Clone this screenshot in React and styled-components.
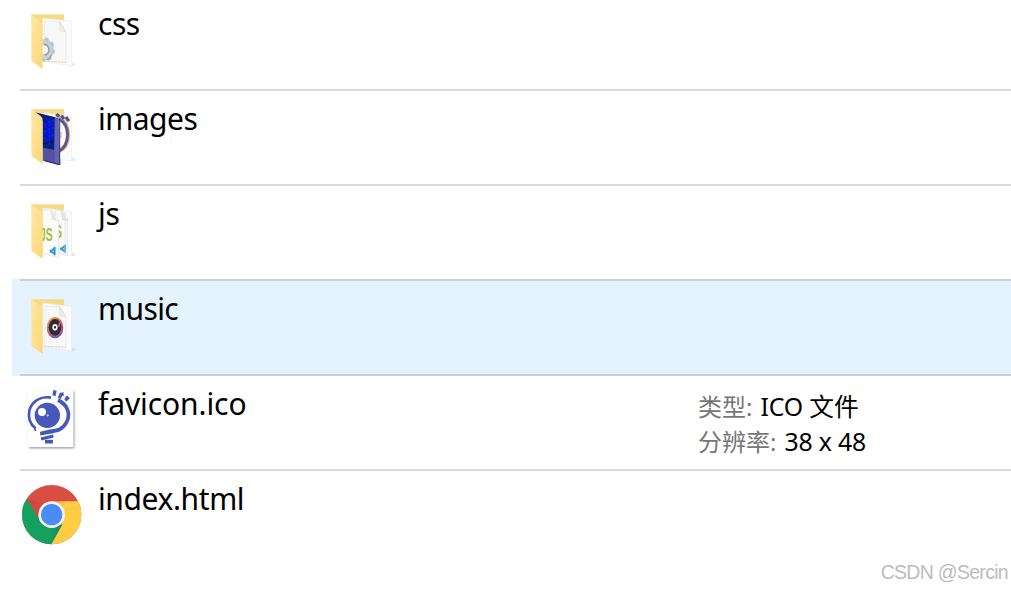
import React from 'react';
import styled, { createGlobalStyle } from 'styled-components';

const GlobalStyle = createGlobalStyle`
  html,
  body {
    margin: 0;
    background: #fff;
    overflow: hidden;
  }
`;

const Page = styled.main`
  position: relative;
  height: 590px;
  overflow: hidden;
  color: #000;
  font-family: 'Noto Sans', 'Noto Sans CJK SC', sans-serif;
`;

const List = styled.div`
  margin-top: -4px;
  padding-left: 12px;
`;

const Divider = styled.div`
  height: 2px;
  background: ${props => (props.$active ? '#c4d1dc' : '#dadada')};
  border-left: 8px solid ${props => (props.$active ? '#e5f3ff' : '#fff')};
`;

const Row = styled.div`
  display: grid;
  grid-template-columns: 60px 584px 1fr;
  column-gap: 16px;
  height: 93px;
  padding-left: 10px;
  box-sizing: border-box;
  background: ${props => (props.$active ? '#e5f3ff' : '#fff')};
`;

const Icon = styled.svg`
  display: block;
  width: 60px;
  height: 60px;
  margin-top: 14px;
  overflow: visible;
`;

const Name = styled.div`
  margin-top: 8px;
  font-size: 30px;
  line-height: 40px;
  letter-spacing: ${props => props.$spacing || 0}px;
  white-space: nowrap;
`;

const Details = styled.dl`
  margin: 13px 0 0;
  font-size: 24px;
  line-height: 35px;
`;

const Detail = styled.div`
  display: flex;
  gap: 8px;
  height: 35px;
  white-space: nowrap;
`;

const Label = styled.dt`
  color: #777;
`;

const Value = styled.dd`
  margin: 0;
  font-size: 24.8px;
  letter-spacing: -0.15px;
`;

const Watermark = styled.div`
  position: absolute;
  right: 3px;
  bottom: 6px;
  color: #bcbcbc;
  font-family: 'Liberation Sans', sans-serif;
  font-size: 19.5px;
  line-height: 24px;
  letter-spacing: -0.7px;
`;

const Folder = ({ id, children }) => (
  <Icon viewBox="36 30 180 180">
    <defs>
      <linearGradient id={`${id}-front`} x1="0" y1="0" x2="1" y2="1">
        <stop offset="0" stopColor="#ffe8a2" />
        <stop offset="1" stopColor="#fad679" />
      </linearGradient>
      <linearGradient id={`${id}-shade`}>
        <stop offset="0" stopColor="#999" stopOpacity="0.35" />
        <stop offset="1" stopColor="#999" stopOpacity="0" />
      </linearGradient>
    </defs>
    <path d="M180 187L203 192Q200 198 184 199Z" fill={`url(#${id}-shade)`} />
    <path d="M64 43H162V70H64Z" fill="#f7da85" />
    <path d="M98 54L185 64V198L98 184Z" fill="#fbfbfb" stroke="#e6e6e6" strokeWidth="1.5" />
    {children}
    <path d="M64 43L91 62Q98 67 98 77V207L64 183Z" fill={`url(#${id}-front)`} />
  </Icon>
);

const Sheet = () => (
  <>
    <path d="M104 64H150L168 95V187L104 184Z" fill="#f8f8f8" stroke="#e4e4e4" strokeWidth="2" />
    <path d="M148 65L168 96L150 92Z" fill="#eeeeea" stroke="#d2d2cc" strokeWidth="1.5" />
    <path d="M104 184L168 187" stroke="#c9c9c9" strokeWidth="2" strokeDasharray="6 4" />
  </>
);

const CssFolder = () => (
  <Folder id="css">
    <Sheet />
    <g transform="translate(104 149) scale(.84 1)">
      <circle r="23" fill="none" stroke="#c8d0d6" strokeWidth="19" />
      <circle r="32" fill="none" stroke="#b8c2c9" strokeWidth="9" strokeDasharray="12.6 12.53" />
      <path d="M-2 -16A16 16 0 0 1 0 16" fill="none" stroke="#929da5" strokeWidth="5" />
      <path d="M24 15L18 26L7 31" fill="none" stroke="#8f9ba4" strokeWidth="4" />
    </g>
  </Folder>
);

const ImagesFolder = () => (
  <Folder id="images">
    <path d="M145 61L154 63V187L145 185Z" fill="#f6f6fb" />
    <path d="M146 71Q174 83 174 121Q172 157 147 168" fill="none" stroke="#e3b04b" strokeWidth="13" />
    <path d="M146 71Q173 83 173 121Q171 157 147 168" fill="none" stroke="#4c55ae" strokeWidth="8" />
    <path d="M139 58l9 8M154 63l8 10M168 67l9 12" stroke="#e3b04b" strokeWidth="12" />
    <path d="M139 57l8 8M154 62l8 10M168 66l8 12" stroke="#4452b7" strokeWidth="9" />
    <path d="M153 111V130" stroke="#ee9ba8" strokeWidth="3" />
    <path d="M76 52L145 70L151 210L98 197V80Z" fill="#5552a5" />
    <path d="M78 53L136 67L133 165L98 158V78Z" fill="#082184" />
    <path d="M106 74L129 73L127 139L104 141Z" fill="#0712dd" />
    <path d="M105 84V148M118 78V152M128 74V125" stroke="#1035ad" strokeWidth="4" strokeDasharray="8 4 3 6" />
    <path d="M98 146L133 139" stroke="#071348" strokeWidth="5" strokeDasharray="8 3" />
    <path d="M134 69L145 71L151 210L133 201Z" fill="#6564b1" />
    <path d="M149 73V209" stroke="#343975" strokeWidth="3" />
    <path d="M98 158L133 166V203L98 195Z" fill="#5552a4" />
    <path d="M105 197L147 209" stroke="#202454" strokeWidth="3" />
  </Folder>
);

const CodeMark = ({ x, y }) => (
  <g transform={`translate(${x} ${y})`} fill="none" stroke="#2499d8" strokeWidth="5">
    <path d="M1 5L14 17V-1L1 12" />
    <path d="M15 -3V19" strokeWidth="5" />
  </g>
);

const ScriptText = styled.text`
  font-family: 'Liberation Sans', sans-serif;
  font-size: 53px;
  font-weight: 700;
  fill: #adba38;
`;

const JsFolder = () => (
  <Folder id="js">
    <path d="M136 61H158L172 81V197L136 187Z" fill="#fafafa" stroke="#dedede" strokeWidth="2" />
    <path d="M154 61L173 93L157 89Z" fill="#e5e5e2" stroke="#c8c8c4" />
    <ScriptText transform="translate(135 145) scale(.6 1)">S</ScriptText>
    <CodeMark x={150} y={168} />
    <path d="M98 60H126L146 91V204L98 190Z" fill="#fbfbfb" stroke="#dedede" strokeWidth="2" />
    <path d="M124 63L140 92L126 87Z" fill="#e8e8e3" stroke="#cdcdc5" />
    <ScriptText transform="translate(90 152) scale(.59 1)">JS</ScriptText>
    <CodeMark x={119} y={175} />
    <path d="M165 66V194" stroke="#e2e2e2" strokeWidth="2" />
  </Folder>
);

const MusicFolder = () => (
  <Folder id="music">
    <defs>
      <linearGradient id="disc-edge" x1="0" y1="0" x2="0.6" y2="1">
        <stop offset="0" stopColor="#f0aa51" />
        <stop offset="0.5" stopColor="#c76e5b" />
        <stop offset="1" stopColor="#8352b8" />
      </linearGradient>
    </defs>
    <Sheet />
    <ellipse cx="135" cy="128" rx="25" ry="32" fill="url(#disc-edge)" />
    <ellipse cx="135" cy="127" rx="19" ry="25" fill="#302b33" />
    <ellipse cx="135" cy="127" rx="8" ry="10" fill="#f0eff2" />
    <ellipse cx="135" cy="127" rx="3" ry="4" fill="#25212b" />
    <path d="M154 110L148 117L146 126" fill="none" stroke="#df5d60" strokeWidth="5" />
  </Folder>
);

const PaperShadow = styled.rect`
  filter: drop-shadow(3px 4px 3px rgba(0, 0, 0, 0.38));
`;

const Favicon = () => (
  <Icon viewBox="36 30 180 180">
    <PaperShadow x="54" y="30" width="136" height="171" fill="#fff" />
    <g fill="none" stroke="#4658ba">
      <path d="M123 53C93 47 65 63 58 92C53 119 63 135 77 145" strokeWidth="8" />
      <path d="M144 60C171 73 184 101 169 128C157 149 143 153 119 154L91 161" strokeWidth="11" />
      <path d="M135 31l-3 16M154 41l-6 14M176 51l-10 10M151 43l10 -1M167 54l8 -2" strokeWidth="10" />
      <path d="M91 161L130 155" strokeWidth="10" />
      <path d="M93 177L130 168" strokeWidth="10" />
      <path d="M105 185H129" strokeWidth="11" />
      <path d="M74 146l3 7" strokeWidth="5" />
    </g>
    <circle cx="112" cy="106" r="38" fill="#4658ba" />
    <circle cx="96" cy="96" r="12" fill="#fff" />
    <path d="M113 102v8M109 106h8" stroke="#dce1ff" strokeWidth="2" />
  </Icon>
);

const Chrome = () => (
  <Icon viewBox="36 45 180 180">
    <defs>
      <clipPath id="browser-disc"><circle cx="125" cy="134" r="89" /></clipPath>
      <linearGradient id="yellow-fold" x1="0" y1="0" x2="0.35" y2="0.35">
        <stop offset="0" stopColor="#d7a136" />
        <stop offset="0.8" stopColor="#ffcd43" />
      </linearGradient>
      <linearGradient id="green-fold" x1="0" y1="0" x2="1" y2="0">
        <stop offset="0" stopColor="#13a260" />
        <stop offset="0.72" stopColor="#159f5d" />
        <stop offset="1" stopColor="#168455" />
      </linearGradient>
    </defs>
    <g clipPath="url(#browser-disc)">
      <rect x="36" y="45" width="180" height="180" fill="#d94d42" />
      <path d="M125 94H220V226H120L159 154Z" fill="url(#yellow-fold)" />
      <path d="M34 58L91 154Q121 182 158 162L123 225H30Z" fill="url(#green-fold)" />
      <path d="M52 88L90 154Q82 120 103 102Z" fill="#b94139" opacity=".35" />
    </g>
    <circle cx="125" cy="134" r="40" fill="#f2f2f2" />
    <circle cx="125" cy="134" r="32" fill="#4b8bf4" />
  </Icon>
);

const files = [
  { name: 'css', icon: CssFolder, spacing: -0.5 },
  { name: 'images', icon: ImagesFolder, spacing: -0.5 },
  { name: 'js', icon: JsFolder, spacing: -0.3 },
  { name: 'music', icon: MusicFolder, active: true, spacing: -0.6 },
  {
    name: 'favicon.ico',
    icon: Favicon,
    spacing: -0.1,
    details: [
      ['类型:', 'ICO 文件'],
      ['分辨率:', '38 x 48']
    ]
  },
  { name: 'index.html', icon: Chrome, spacing: -0.4 }
];

export default function App() {
  return (
    <Page>
      <GlobalStyle />
      <List>
        {files.map(({ name, icon: FileIcon, active, details, spacing }, index) => (
          <React.Fragment key={name}>
            {index > 0 && <Divider $active={active || files[index - 1].active} />}
            <Row $active={active}>
              <FileIcon />
              <Name $spacing={spacing}>{name}</Name>
              {details && (
                <Details>
                  {details.map(([label, value]) => (
                    <Detail key={label}>
                      <Label>{label}</Label>
                      <Value>{value}</Value>
                    </Detail>
                  ))}
                </Details>
              )}
            </Row>
          </React.Fragment>
        ))}
      </List>
      <Watermark>CSDN @Sercin</Watermark>
    </Page>
  );
}
